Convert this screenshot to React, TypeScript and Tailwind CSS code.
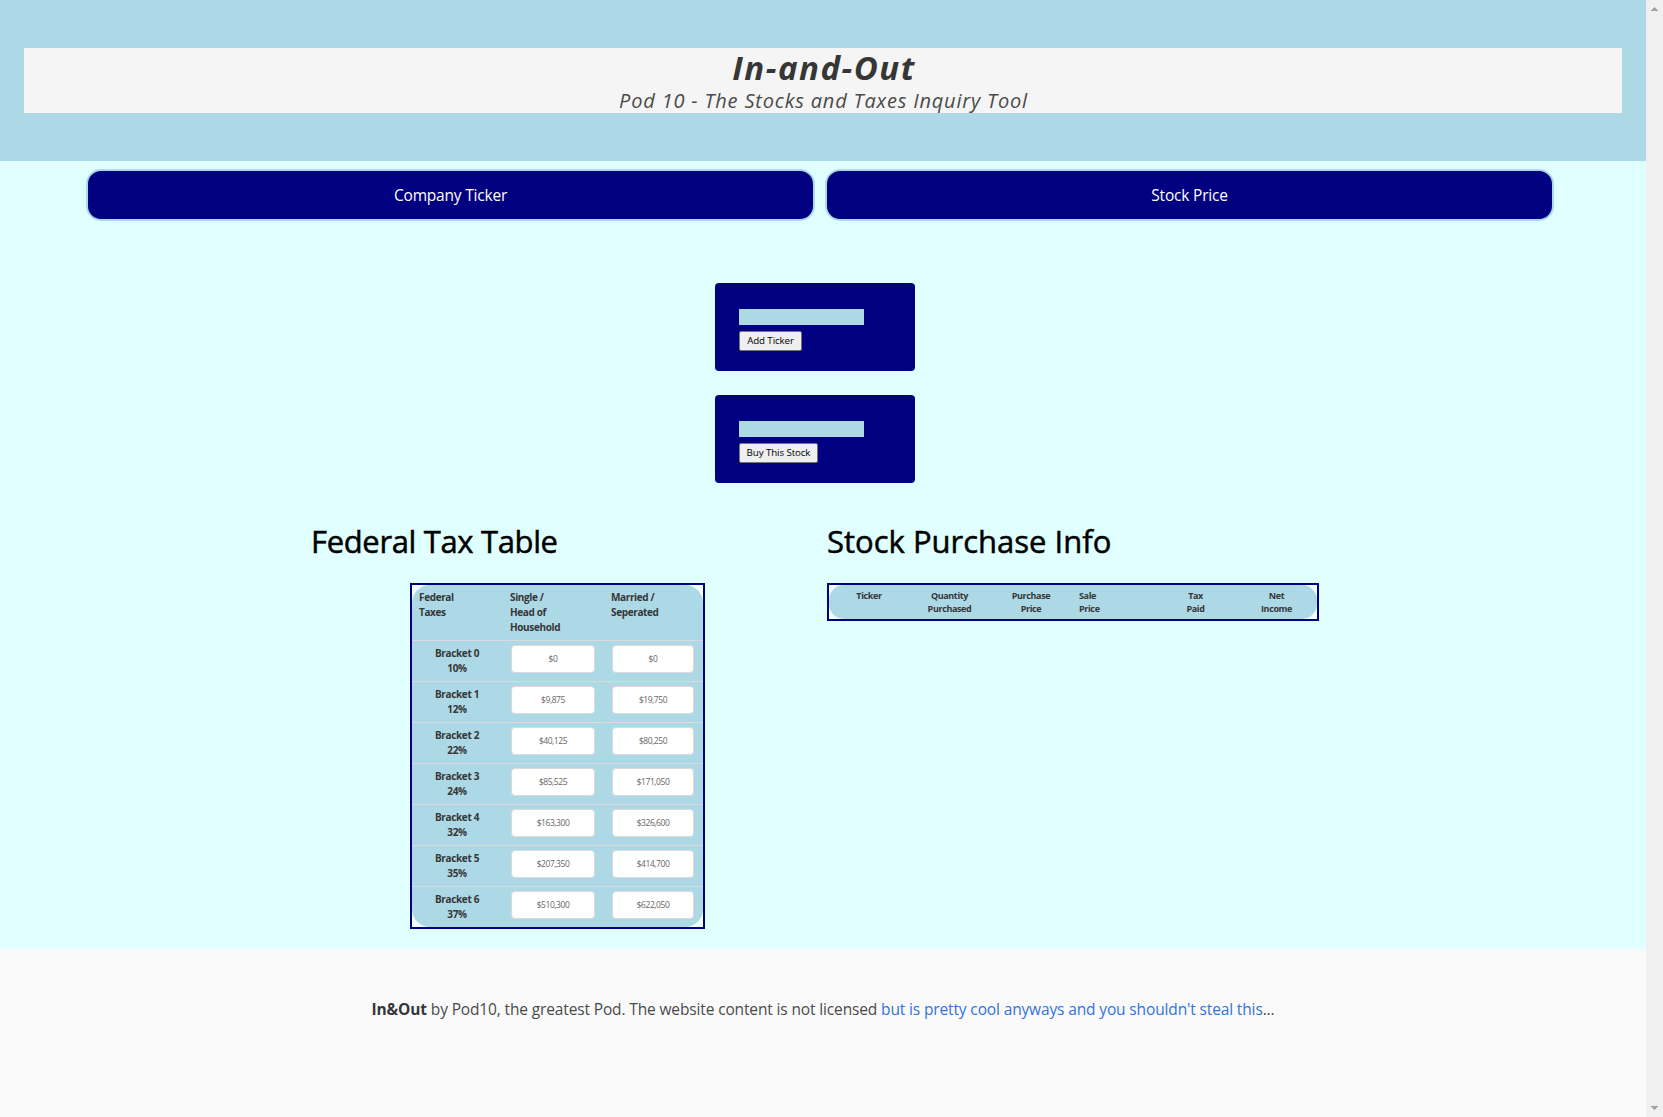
const brackets = [
  { name: "Bracket 0", rate: "10%", single: "$0", married: "$0" },
  { name: "Bracket 1", rate: "12%", single: "$9,875", married: "$19,750" },
  { name: "Bracket 2", rate: "22%", single: "$40,125", married: "$80,250" },
  { name: "Bracket 3", rate: "24%", single: "$85,525", married: "$171,050" },
  { name: "Bracket 4", rate: "32%", single: "$163,300", married: "$326,600" },
  { name: "Bracket 5", rate: "35%", single: "$207,350", married: "$414,700" },
  { name: "Bracket 6", rate: "37%", single: "$510,300", married: "$622,050" },
];

function Amount({ value }: { value: string }) {
  return (
    <div className="flex h-7 items-center justify-center rounded border border-[#dbdbdb] bg-white text-[8.5px] leading-none tracking-[-0.45px] text-[#666666]">
      {value}
    </div>
  );
}

function TickerForm({ label, width }: { label: string; width: string }) {
  return (
    <form className="h-[88px] w-[200px] rounded bg-[#000080] pl-6 pt-[26px]">
      <div className="h-4 w-[125px] bg-[#add8e6]" />
      <button
        type="button"
        className={`mt-1.5 flex h-5 items-center justify-center whitespace-nowrap rounded-[2px] border border-[#767676] bg-[#efefef] text-[9.75px] leading-none tracking-[-0.1px] text-black ${width}`}
      >
        {label}
      </button>
    </form>
  );
}

function TaxTable() {
  return (
    <div className="ml-[98px] mt-[21px] h-[346px] w-[295px] border-2 border-[#000080] bg-[#f0ffff]">
      <div className="h-full rounded-[18px] bg-[#add8e6] text-[10px] font-bold leading-[15px] tracking-[-0.36px] text-[#363636]">
        <div className="grid h-14 grid-cols-[91px_101px_1fr] border-b border-[#dbdbdb] pl-[7px] pt-[5px]">
          <div>Federal<br />Taxes</div>
          <div>Single /<br />Head of<br />Household</div>
          <div>Married /<br />Seperated</div>
        </div>
        {brackets.map((b) => (
          <div
            key={b.name}
            className="grid h-[41px] grid-cols-[90px_84px_82px] gap-x-[9px] border-b border-[#dbdbdb] last:h-10 last:border-b-0"
          >
            <div className="pt-[5px] text-center">
              {b.name}
              <br />
              {b.rate}
            </div>
            <div className="pt-1 font-normal">
              <Amount value={b.single} />
            </div>
            <div className="ml-2 -mr-2 pt-1 font-normal">
              <Amount value={b.married} />
            </div>
          </div>
        ))}
      </div>
    </div>
  );
}

function PurchaseTable() {
  return (
    <div className="mt-[21px] h-[38px] w-[492px] border-2 border-[#000080] bg-[#f0ffff]">
      <div className="grid h-full grid-cols-[80px_81px_82px_83px_81px_1fr] rounded-[15px] bg-[#add8e6] pt-[4px] text-center text-[9px] font-bold leading-[13px] tracking-[-0.37px] text-[#363636]">
        <div>Ticker</div>
        <div>Quantity<br />Purchased</div>
        <div>Purchase<br />Price</div>
        <div className="pl-[7px] text-left">Sale<br />Price</div>
        <div>Tax<br />Paid</div>
        <div>Net<br />Income</div>
      </div>
    </div>
  );
}

export default function App() {
  return (
    <div className="flex h-[1117px] w-[1663px] overflow-hidden font-['Segoe_UI','Open_Sans',sans-serif]">
      <div className="flex w-[1646px] flex-col">
        <header className="h-[161px] bg-[#add8e6] px-6 py-12">
          <div className="h-[65px] bg-[#f5f5f5] text-center font-['Comic_Sans_MS','Open_Sans',sans-serif] italic">
            <h1 className="pl-[2px] text-[33px] font-bold leading-10 tracking-[1.5px] text-[#363636]">In-and-Out</h1>
            <p className="pl-px pt-px text-[20px] leading-6 tracking-[0.82px] text-[#4a4a4a]">
              Pod 10 - The Stocks and Taxes Inquiry Tool
            </p>
          </div>
        </header>

        <main className="h-[788px] bg-[#e0ffff]">
          <div className="flex gap-[10px] pl-[86px] pt-2 text-[15.5px] tracking-[-0.2px] text-white">
            <div className="flex h-[52px] w-[729px] items-center justify-center rounded-[15px] border-2 border-[#add8e6] bg-[#000080] pt-px">
              Company Ticker
            </div>
            <div className="flex h-[52px] w-[729px] items-center justify-center rounded-[15px] border-2 border-[#add8e6] bg-[#000080] pt-px">
              Stock Price
            </div>
          </div>

          <div className="flex flex-col gap-6 pl-[715px] pt-[62px]">
            <TickerForm label="Add Ticker" width="w-[63px]" />
            <TickerForm label="Buy This Stock" width="w-[79px]" />
          </div>

          <div className="flex pt-[38px] text-black">
            <section className="ml-[311px] w-[516px]">
              <h2 className="text-[31px] font-medium leading-[41px] tracking-[-0.35px] [-webkit-text-stroke:0.5px]">
                Federal Tax Table
              </h2>
              <div className="pl-px">
                <TaxTable />
              </div>
            </section>
            <section>
              <h2 className="text-[31px] font-medium leading-[41px] [-webkit-text-stroke:0.5px]">Stock Purchase Info</h2>
              <PurchaseTable />
            </section>
          </div>
        </main>

        <footer className="flex-1 bg-[#fafafa] pt-12 text-center text-[15.5px] leading-6 tracking-[-0.14px] text-[#4a4a4a]">
          <p>
            <strong className="font-bold text-[#363636]">In&amp;Out</strong> by Pod10, the greatest Pod. The website content is
            not licensed <a className="text-[#3273dc]">but is pretty cool anyways and you shouldn't steal this</a>...
          </p>
        </footer>
      </div>

      <div className="flex w-[17px] flex-col items-center justify-between bg-[#f0f0f0] pb-[7px] pt-[7px]">
        <svg width="7" height="4" viewBox="0 0 7 4" fill="#a3a3a3" shapeRendering="crispEdges">
          <path d="M3 0h1v1h1v1h1v1h1v1H0V3h1V2h1V1h1z" />
        </svg>
        <svg width="7" height="4" viewBox="0 0 7 4" fill="#a3a3a3" shapeRendering="crispEdges">
          <path d="M0 0h7v1H6v1H5v1H4v1H3V3H2V2H1V1H0z" />
        </svg>
      </div>
    </div>
  );
}
